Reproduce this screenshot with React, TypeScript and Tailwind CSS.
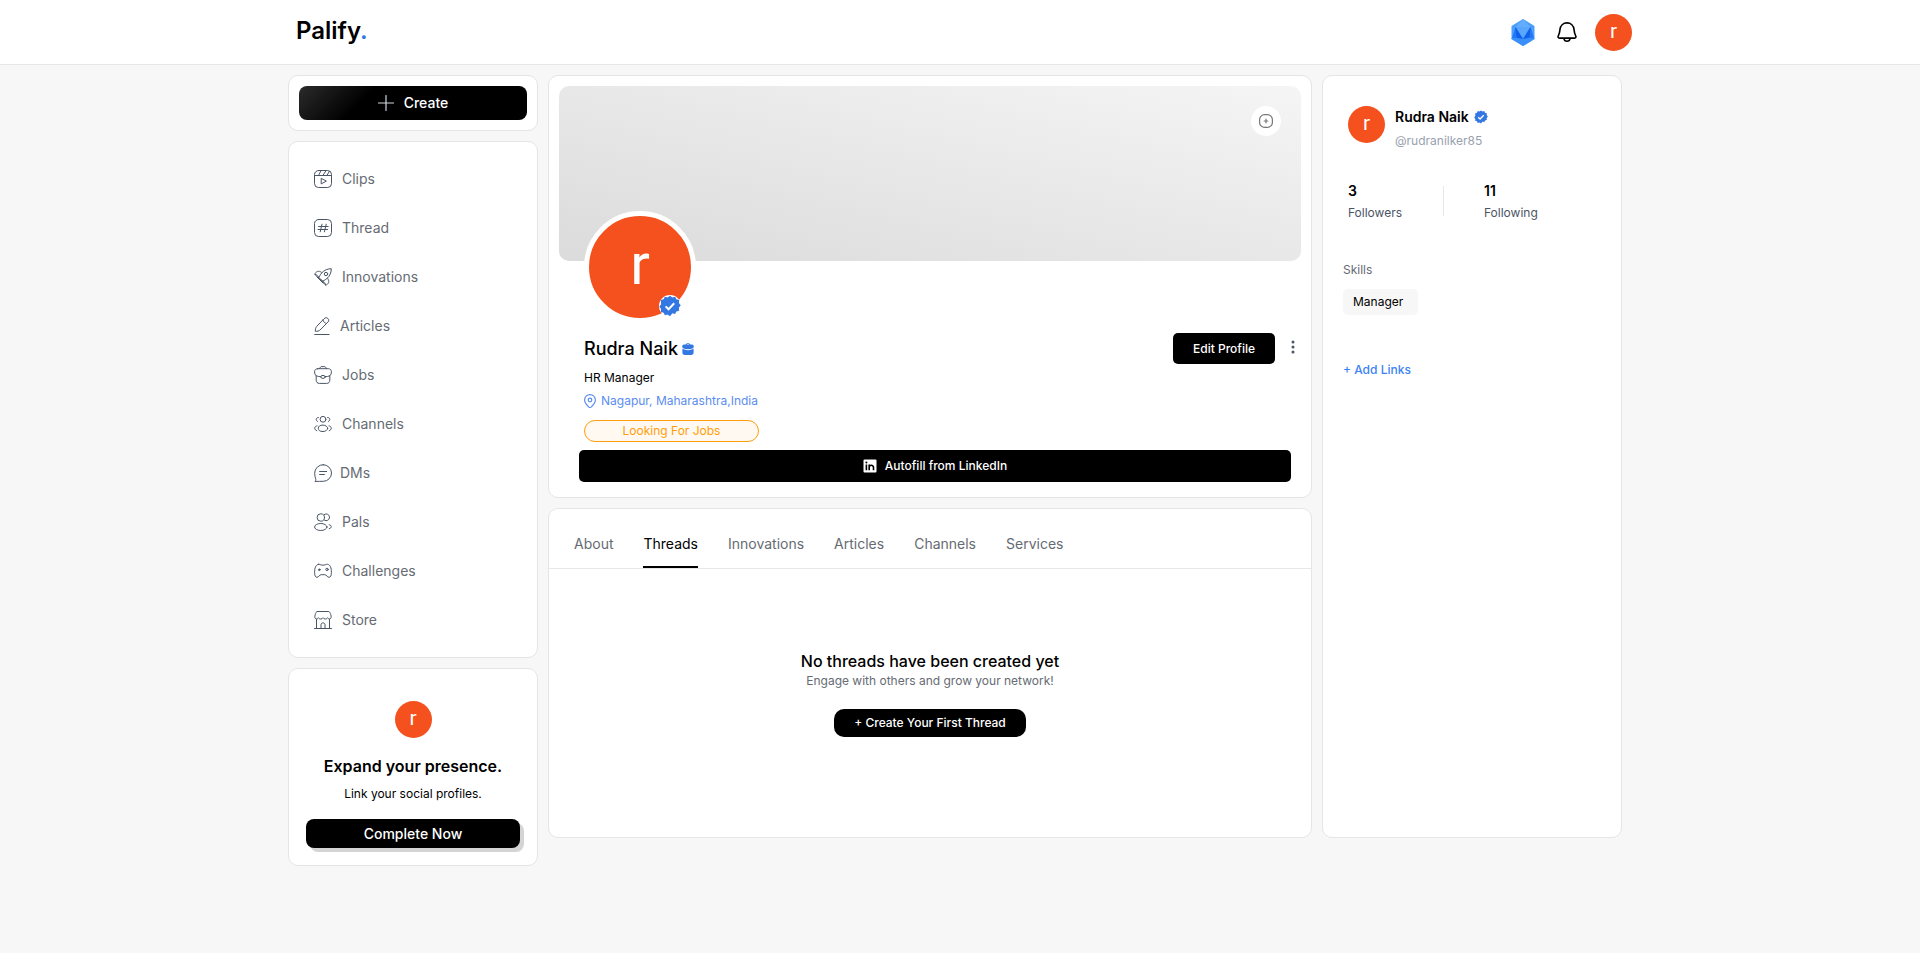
import { useState, type ReactNode } from "react"
import clsx from "clsx"

type IconProps = { children: ReactNode; className?: string; viewBox?: string }

const Icon = ({ children, className = "size-[18px] text-gray-600", viewBox = "0 0 18 18" }: IconProps) => (
    <svg
        className={clsx("shrink-0", className)}
        viewBox={viewBox}
        fill="none"
        stroke="currentColor"
        strokeWidth="1"
        strokeLinecap="round"
        strokeLinejoin="round"
        aria-hidden="true"
    >
        {children}
    </svg>
)

const ClipsIcon = () => (
    <Icon>
        <rect x="0.5" y="0.5" width="17" height="17" rx="4" />
        <path d="M0.5 5.500h17M4.600 5.300 7 0.700M9 5.300 12 0.700M13 5.300 15.400 1.300" />
        <path d="M7.200 8.700v5.200l4.800-2.600z" />
    </Icon>
)

const ThreadIcon = () => (
    <Icon>
        <rect x="0.5" y="0.5" width="17" height="17" rx="4" />
        <path d="M8 5.200 6.200 12.800M12.200 5.200l-1.800 7.600M4.600 7.500h9.600M4 10.500h9.600" />
    </Icon>
)

const InnovationsIcon = () => (
    <Icon>
        <path d="M4.800 9.600C6.800 4.800 10.600 0.900 17.300 0.700c0 6.400-3.900 10.500-8.700 12.500z" />
        <circle cx="12" cy="6" r="1.700" />
        <path d="M7.500 4.300C4.800 2.100 1.700 3.400 0.700 6.500c1.600-.2 3 .900 4.100 3.100M13.700 10.500c2.200 2.700.9 5.800-2.200 6.800.2-1.600-.9-3-2.900-4.100" />
        <path d="M4.800 9.600c-1.600-.2-2.600-1.300-3.300-3M8.600 13.200c.4 1.500 1.300 2.600 2.900 3.300M3 9l6.200 6.200M6.200 10.600l1.600 1.600" />
    </Icon>
)

const ArticlesIcon = () => (
    <Icon className="h-[18px] w-4 text-gray-600" viewBox="0 0 16 18">
        <path d="M10.300 1.500c1.300-1.300 2.600-.9 3.600 0s1.300 2.200 0 3.600l-7.800 7.900c-.8.800-3 1.500-4.700 1.400-.3-1.700.3-3.900 1.100-4.800zM8.900 2.900c.5 2 1.900 3.200 3.700 3.600M0.700 17.500h14.400" />
    </Icon>
)

const JobsIcon = () => (
    <Icon>
        <path d="M3.800 2.700h10.400c2.200 0 3.200 1.300 3.200 3.200 0 1.700-.6 2.900-1.600 3.900v4.400c0 2-1.100 3.200-3.200 3.200H5.400c-2.100 0-3.200-1.200-3.200-3.200V9.800C1.200 8.800.6 7.600.6 5.900c0-1.900 1-3.200 3.200-3.200z" />
        <path d="M5.600 2.500C6 1.100 6.800.6 8 .6h2c1.200 0 2 .5 2.400 1.900M2.200 9.800c1.700.7 3 .9 4.600.9M15.800 9.800c-1.700.7-3 .9-4.600.9" />
        <ellipse cx="9" cy="10.900" rx="2.300" ry="1.500" />
    </Icon>
)

const ChannelsIcon = () => (
    <Icon>
        <circle cx="9" cy="4.300" r="2.900" />
        <ellipse cx="9" cy="13.300" rx="4.700" ry="3.200" />
        <path d="M4.400 2.500c-2.600-.2-3.300 3-.7 4M13.600 2.500c2.600-.2 3.300 3 .7 4M3 10.800c-3.100.6-3.100 4.200-.2 4.900M15 10.800c3.100.6 3.100 4.200.2 4.900" />
    </Icon>
)

const MessageIcon = () => (
    <Icon>
        <path d="M9.200 0.700a8.200 8.200 0 1 1 0 16.600c-2.500.1-5.200.1-8.200.1.700-.8 1-1.600.7-2.500C1.100 13.200.7 11.300.7 9.200A8.400 8.400 0 0 1 9.200 0.700z" />
        <path d="M5.600 7.500h7M5.600 10.500h4.800" />
    </Icon>
)

const PalsIcon = () => (
    <Icon>
        <circle cx="6.800" cy="4.500" r="3.700" />
        <path d="M10.300 1.500c3-1.800 5.600.7 5.100 3.500-.4 2.200-2.800 3.400-4.900 2.300" />
        <ellipse cx="6.800" cy="14" rx="6.200" ry="3.500" />
        <path d="M15.200 11.700c2.900.7 2.900 3.200 0 4" />
    </Icon>
)

const ChallengesIcon = () => (
    <Icon>
        <path d="M4.400 2.300c1.400-.3 2.300.8 3.600.8h2c1.300 0 2.200-1.100 3.600-.8 2.600.4 3.800 3.400 3.800 8.200 0 3.400-1 4.800-2.300 4.800-2 0-2.400-2.600-4.300-2.600H7.200c-1.900 0-2.300 2.600-4.300 2.600-1.300 0-2.300-1.400-2.300-4.800 0-4.800 1.200-7.800 3.800-8.200z" />
        <circle cx="5.300" cy="7.700" r="0.800" fill="currentColor" />
        <circle cx="13" cy="7.400" r="1.200" />
    </Icon>
)

const StoreIcon = () => (
    <Icon>
        <path d="M0.500 17.500h17M2.500 8.300v9M15.500 8.300v9M7 17.300v-3.500c0-1.300.8-1.900 2-1.900s2 .6 2 1.900v3.500" />
        <path d="M3.200.5h11.600c.7 0 1.400 1.400 2 3.200.6 2 .6 3.800-.9 4.200-1.100.3-1.800-.3-2.300-1.200-.5 1-1.300 1.300-2.300 1.300S9.500 7.600 9 6.700c-.5.9-1.300 1.300-2.300 1.300s-1.800-.3-2.300-1.300c-.5.900-1.200 1.500-2.300 1.200C.6 7.500.6 5.700 1.200 3.700 1.800 1.900 2.500.5 3.200.5z" />
    </Icon>
)

const VerifiedIcon = ({ className, outlined = false }: { className: string; outlined?: boolean }) => (
    <svg className={className} viewBox="0 0 24 24" role="img" aria-label="Verified">
        {outlined && <circle cx="12" cy="12" r="12" fill="#fff" />}
        <path
            fill="#3377e3"
            d="m12 .8 2.600 1.900 3-.9 1.300 2.900 3.100.7-.3 3.200 2 2.700-2 2.700.3 3.200-3.100.7-1.300 2.900-3-.9L12 23.200l-2.600-1.900-3 .9-1.300-2.900-3.100-.7.3-3.200-2-2.700 2-2.700L2 5.400l3.100-.7 1.300-2.900 3 .9z"
        />
        <path d="m7.200 12.400 3.200 3.100 6.200-6.500" fill="none" stroke="#fff" strokeWidth="2.200" />
    </svg>
)

const GemIcon = () => (
    <svg className="h-[27px] w-6" viewBox="0 0 24 27" aria-hidden="true">
        <path fill="#4c9efc" d="M12 0 23.500 7v13L12 27 .5 20V7z" />
        <path fill="#62adfd" d="M12 0 19.500 8h-15z" />
        <path fill="#58a6fd" d="M4.500 8h15L12 20z" />
        <path fill="#2378f6" d="M4.500 8 12 20 1 19zM19.500 8 12 20l11-1z" />
        <path fill="#0f61ec" d="M4.500 8 12 20l-6.500-1.500zM19.500 8 12 20l6.500-1.500z" />
        <path fill="#3a90fb" d="M.5 19 12 20l11.500-1v1L12 27 .5 20z" />
    </svg>
)

const Avatar = ({ className = "size-[37px] pb-0.5 text-[21px]" }: { className?: string }) => (
    <span
        className={clsx(
            "flex shrink-0 items-center justify-center rounded-full bg-[#f4511e] font-['Roboto',sans-serif] leading-none font-normal text-white",
            className,
        )}
    >
        r
    </span>
)

const Card = ({ children, className }: { children: ReactNode; className?: string }) => (
    <section className={clsx("rounded-[10px] border border-[#e5e5e5] bg-white", className)}>{children}</section>
)

const navItems = [
    { label: "Clips", icon: <ClipsIcon />, gap: "gap-2.5" },
    { label: "Thread", icon: <ThreadIcon />, gap: "gap-2.5" },
    { label: "Innovations", icon: <InnovationsIcon />, gap: "gap-2.5" },
    { label: "Articles", icon: <ArticlesIcon />, gap: "gap-2.5" },
    { label: "Jobs", icon: <JobsIcon />, gap: "gap-2.5" },
    { label: "Channels", icon: <ChannelsIcon />, gap: "gap-2.5" },
    { label: "DMs", icon: <MessageIcon />, gap: "gap-2" },
    { label: "Pals", icon: <PalsIcon />, gap: "gap-2.5" },
    { label: "Challenges", icon: <ChallengesIcon />, gap: "gap-2.5" },
    { label: "Store", icon: <StoreIcon />, gap: "gap-2.5" },
]

const tabs = ["About", "Threads", "Innovations", "Articles", "Channels", "Services"]

const Header = () => (
    <header className="border-b border-gray-200 bg-white">
        <div className="mx-auto flex h-16 w-[70%] items-center justify-between">
            <a href="#" className="pb-0.5 pl-2 text-2xl font-semibold">
                Palify<span className="text-[#3377e3]">.</span>
            </a>
            <div className="flex items-center">
                <button type="button" aria-label="Rewards" className="mr-[21px]">
                    <GemIcon />
                </button>
                <button type="button" aria-label="Notifications" className="mr-[17px]">
                    <Icon className="size-[22px]" viewBox="0 0 22 22">
                        <path
                            strokeWidth="1.600"
                            d="M11 1.900c-3.900 0-6.600 2.700-7 6.500-.3 3.100-.6 4.600-1.700 6.500-.6 1.200-.2 2.200 1.200 2.200h15c1.400 0 1.800-1 1.200-2.200-1.100-1.900-1.400-3.400-1.700-6.500-.4-3.800-3.100-6.500-7-6.500zM7.800 17.300c.4 1.800 1.500 2.900 3.200 2.900s2.800-1.100 3.200-2.900"
                        />
                    </Icon>
                </button>
                <button type="button" aria-label="Account">
                    <Avatar />
                </button>
            </div>
        </div>
    </header>
)

const Sidebar = () => (
    <aside className="flex w-[250px] shrink-0 flex-col gap-2.5">
        <Card className="p-2.5">
            <button
                type="button"
                className="flex h-[34px] w-full items-center justify-center gap-2.5 rounded-lg bg-[linear-gradient(135deg,#2b2b2b,#000_30%)] text-sm font-medium text-white"
            >
                <Icon className="size-4 text-gray-300" viewBox="0 0 16 16">
                    <path d="M8 0.500v15M0.500 8h15" strokeWidth="1.200" />
                </Icon>
                Create
            </button>
        </Card>
        <Card className="px-[25px] pt-3 pb-[13px]">
            <nav>
                {navItems.map(({ label, icon, gap }) => (
                    <a key={label} href="#" className={clsx("flex h-[49px] items-center text-sm text-[#666b73]", gap)}>
                        {icon}
                        {label}
                    </a>
                ))}
            </nav>
        </Card>
        <Card className="flex flex-col items-center px-[17px] pt-8 pb-[17px]">
            <Avatar />
            <h2 className="mt-4 font-semibold">Expand your presence.</h2>
            <p className="mt-1.5 text-xs leading-5">Link your social profiles.</p>
            <button
                type="button"
                className="mt-[15px] h-[29px] w-full rounded-lg bg-black text-sm font-medium text-white shadow-[4px_4px_0_#d4d4d4]"
            >
                Complete Now
            </button>
        </Card>
    </aside>
)

const ProfileCard = () => (
    <Card className="p-2.5 pb-[15px]">
        <div className="flex h-[175px] items-start justify-end rounded-[10px] bg-linear-to-tr from-[#dbdbdb] to-[#f5f5f5] p-5">
            <button
                type="button"
                aria-label="Change cover"
                className="flex size-[30px] items-center justify-center rounded-full bg-white text-[#777]"
            >
                <Icon className="size-3.5" viewBox="0 0 14 14">
                    <rect x="0.600" y="0.600" width="12.800" height="12.800" rx="5" strokeWidth="1.200" />
                    <path d="M7 5.200v3.600M5.200 7h3.600" strokeWidth="1.200" />
                </Icon>
            </button>
        </div>
        <div className="relative -mt-[50px] ml-[25px] w-fit">
            <Avatar className="size-28 border-5 border-white pb-1.5 text-[58px]" />
            <VerifiedIcon outlined className="absolute right-[15px] bottom-1.5 size-[22px]" />
        </div>
        <div className="flex items-start justify-between pt-2.5 pr-0.5 pl-[25px]">
            <div className="pt-0.5">
                <div className="flex items-center gap-1">
                    <h1 className="text-lg font-medium">Rudra Naik</h1>
                    <svg className="size-3" viewBox="0 0 12 12" aria-hidden="true">
                        <path fill="#5b93ee" d="M3.500 2.200C3.700.8 4.600 0 6 0s2.300.8 2.500 2.200h-1C7.300 1.400 6.900 1 6 1s-1.300.4-1.500 1.200z" />
                        <path fill="#3377e3" d="M2.200 1.500h7.600c1.300 0 2 .9 2 2 0 .7-.3 1.300-.8 1.700-3 1.300-7 1.300-10 0-.5-.4-.8-1-.8-1.700 0-1.100.7-2 2-2z" />
                        <path fill="#3377e3" d="M.4 5.800c1.300.7 2.700 1 4.200 1.100.8.5 2 .5 2.800 0 1.500-.1 2.900-.4 4.200-1.100v3.800c0 1.600-.9 2.400-2.400 2.400H2.800C1.300 12 .4 11.200.4 9.600z" />
                    </svg>
                </div>
                <p className="mt-[3px] text-xs leading-6">HR Manager</p>
                <p className="flex items-center gap-[5px] text-xs leading-[22px] text-[#5b8df0]">
                    <Icon className="h-3.5 w-3" viewBox="0 0 12 14">
                        <path strokeWidth="1.200" d="M6 .6C3 .6.600 2.900.600 5.900c0 3 2 4.900 4.400 7.200.6.500 1.400.5 2 0 2.400-2.300 4.400-4.200 4.400-7.200C11.400 2.900 9 .6 6 .6z" />
                        <circle strokeWidth="1.200" cx="6" cy="6" r="1.800" />
                    </Icon>
                    Nagapur, Maharashtra,India
                </p>
            </div>
            <div className="flex items-center gap-3">
                <button type="button" className="h-[31px] rounded-[5px] bg-black px-5 text-xs font-medium text-white">
                    Edit Profile
                </button>
                <button type="button" aria-label="More options" className="pb-1 text-gray-600">
                    <svg className="h-3.5 w-3" viewBox="0 0 12 14" fill="currentColor">
                        <circle cx="6" cy="2" r="1.500" />
                        <circle cx="6" cy="7" r="1.500" />
                        <circle cx="6" cy="12" r="1.500" />
                    </svg>
                </button>
            </div>
        </div>
        <p className="mt-2 ml-[25px] flex h-[22px] w-[175px] items-center justify-center rounded-full border border-[#ff9d0a] bg-[#fff9f1] text-xs text-[#ff9d0a]">
            Looking For Jobs
        </p>
        <div className="mt-2 pr-2.5 pl-5">
            <button
                type="button"
                className="flex h-8 w-full items-center justify-center gap-2 rounded-[5px] bg-black text-xs font-medium text-white"
            >
                <svg className="size-3.5" viewBox="0 0 14 14" aria-hidden="true">
                    <rect x="0.500" y="0.500" width="13" height="13" rx="1" fill="#fff" />
                    <path d="M3.400 5.600v5.600M6.200 11.200V5.600M6.200 8.300c0-2.600 4.300-2.800 4.300.1v2.800" fill="none" stroke="#000" strokeWidth="1.600" />
                    <circle cx="3.400" cy="3.600" r="1" />
                </svg>
                Autofill from LinkedIn
            </button>
        </div>
    </Card>
)

const ThreadsCard = () => {
    const [activeTab, setActiveTab] = useState<string>("Threads")

    return (
        <Card className="flex-1">
            <div className="flex h-[60px] gap-[30px] border-b border-gray-200 px-[25px]">
                {tabs.map((tab) => (
                    <button
                        key={tab}
                        type="button"
                        onClick={() => setActiveTab(tab)}
                        className={clsx(
                            "border-b-2 pt-3 text-sm",
                            tab === activeTab ? "border-black text-black" : "border-transparent text-[#666b73]",
                        )}
                    >
                        {tab}
                    </button>
                ))}
            </div>
            <div className="flex flex-col items-center pt-20 pb-[100px]">
                <h2 className="font-medium">No threads have been created yet</h2>
                <p className="text-xs text-[#666b73]">Engage with others and grow your network!</p>
                <button type="button" className="mt-5 h-7 rounded-[10px] bg-black px-5 text-xs font-medium text-white">
                    + Create Your First Thread
                </button>
            </div>
        </Card>
    )
}

const SummaryCard = () => (
    <Card className="w-[300px] shrink-0 px-5 pt-[30px]">
        <div className="flex items-start gap-2.5 pl-[5px]">
            <Avatar />
            <div>
                <p className="flex items-center gap-[5px] text-sm leading-[22px] font-semibold">
                    Rudra Naik
                    <VerifiedIcon className="size-3.5" />
                </p>
                <p className="text-xs leading-[26px] text-gray-400">@rudranilker85</p>
            </div>
        </div>
        <div className="mt-[26px] flex items-start pl-[5px]">
            <div className="w-[95px]">
                <p className="text-sm leading-[22px] font-semibold">3</p>
                <p className="text-xs leading-[22px] text-gray-600">Followers</p>
            </div>
            <div className="mt-1.5 mr-10 h-[30px] w-px bg-gray-200" />
            <div>
                <p className="text-sm leading-[22px] font-semibold">11</p>
                <p className="text-xs leading-[22px] text-gray-600">Following</p>
            </div>
        </div>
        <h3 className="mt-9 text-xs leading-5 text-[#666b73]">Skills</h3>
        <p className="mt-[9px] h-[26px] w-[75px] rounded-[5px] bg-[#f7f7f7] pl-2.5 text-xs leading-[26px]">Manager</p>
        <button type="button" className="mt-[45px] text-xs leading-5 font-medium text-[#3b82f6]">
            + Add Links
        </button>
    </Card>
)

const App = () => (
    <div className="min-h-screen bg-[#f7f7f7] font-['Inter',sans-serif] text-black">
        <Header />
        <main className="mx-auto flex w-[70%] items-start gap-2.5 pt-2.5 pr-2.5 pb-10">
            <Sidebar />
            <div className="flex min-w-0 flex-1 gap-2.5">
                <div className="flex min-w-0 flex-1 flex-col gap-2.5">
                    <ProfileCard />
                    <ThreadsCard />
                </div>
                <SummaryCard />
            </div>
        </main>
    </div>
)

export default App
